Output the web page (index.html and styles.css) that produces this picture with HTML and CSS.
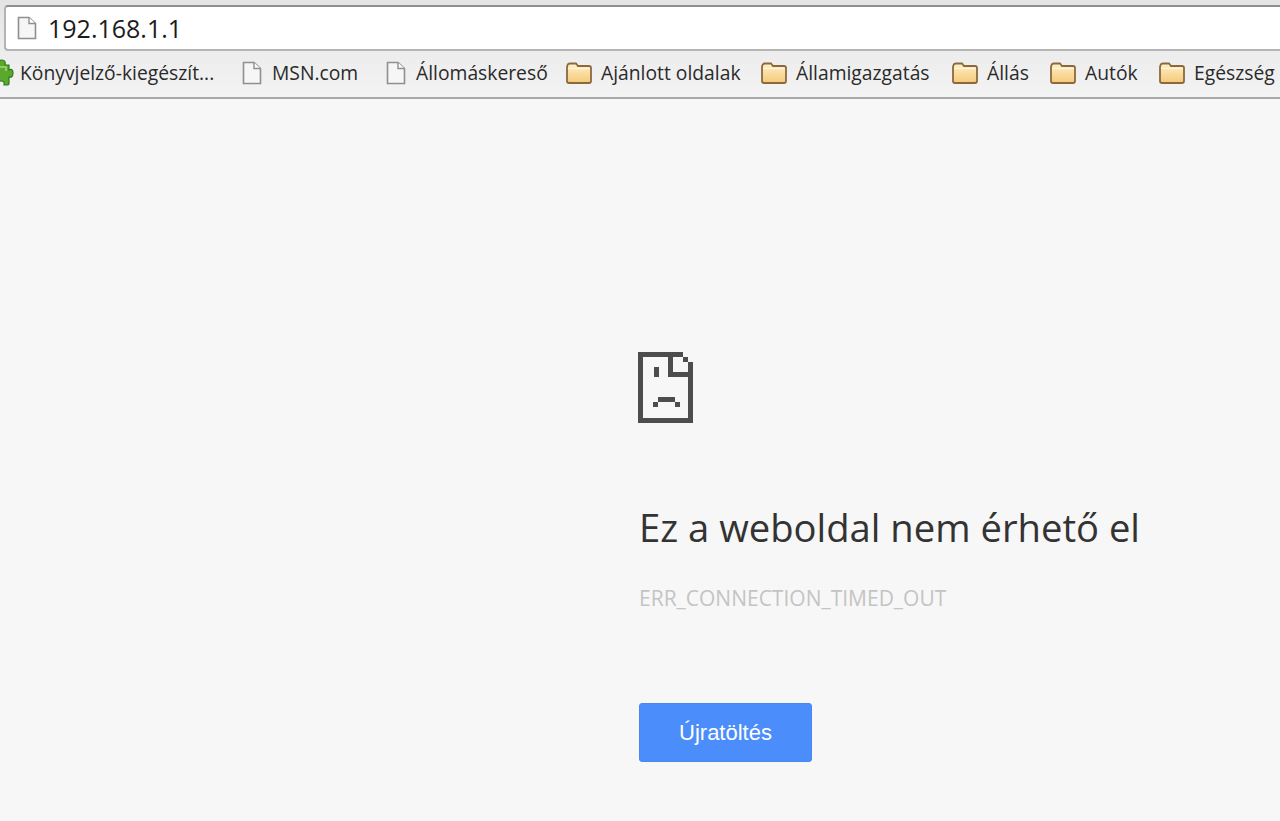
FILE: index.html
```html
<!DOCTYPE html>
<html lang="hu">
<head>
<meta charset="utf-8">
<title>192.168.1.1</title>
<link rel="stylesheet" href="styles.css">
</head>
<body>
<svg class="defs" width="0" height="0">
  <defs>
    <linearGradient id="fg" x1="0" y1="0" x2="0" y2="1"><stop offset="0" stop-color="#fff0c8"/><stop offset="1" stop-color="#f5c878"/></linearGradient>
    <symbol id="page" viewBox="0 0 21 24"><path d="M2.5 1.5H13L19.5 7.5V22.5H2.5Z" fill="#f6f6f6" stroke="#8f8f8f" stroke-width="1.6"/><path d="M13 1.5V7.5H19.5" fill="#fff" stroke="#8f8f8f" stroke-width="1.4"/></symbol>
    <symbol id="folder" viewBox="0 0 26 22"><path d="M1 5V19Q1 21 3 21H23Q25 21 25 19V6Q25 4 23 4H12L10 1.500H4Q2 1.500 1.500 3Z" fill="url(#fg)" stroke="#8a6a3c" stroke-width="1.8"/><path d="M2 6.500H24" stroke="#fff6dc" stroke-width="1.200"/></symbol>
  </defs>
</svg>
<header class="chrome">
  <div class="omnibox">
    <svg class="omni-icon" width="21" height="24"><use href="#page"/></svg>
    <span class="url">192.168.1.1</span>
  </div>
  <nav class="bookmarks">
    <a class="bm bm-ext">
      <svg class="puzzle" width="17" height="27" viewBox="0 0 17 27"><path d="M0 6H2Q1 1 5 1T8 6H12V11Q16 9 16 14T12 18V24Q12 26 10 26H7Q8 22 4 22T1 26H0Z" fill="#5aa82e" stroke="#2f7a1a" stroke-width="1.200"/><path d="M3 8H9V12" fill="none" stroke="#a4d878" stroke-width="1.500"/></svg>
      <span>Könyvjelző-kiegészít...</span>
    </a>
    <a class="bm bm-msn"><svg class="ic-page" width="21" height="24"><use href="#page"/></svg><span>MSN.com</span></a>
    <a class="bm bm-allo"><svg class="ic-page" width="21" height="24"><use href="#page"/></svg><span>Állomáskereső</span></a>
    <a class="bm bm-ajan"><svg class="ic-folder" width="26" height="22"><use href="#folder"/></svg><span>Ajánlott oldalak</span></a>
    <a class="bm bm-alla"><svg class="ic-folder" width="26" height="22"><use href="#folder"/></svg><span>Államigazgatás</span></a>
    <a class="bm bm-allas"><svg class="ic-folder" width="26" height="22"><use href="#folder"/></svg><span>Állás</span></a>
    <a class="bm bm-auto"><svg class="ic-folder" width="26" height="22"><use href="#folder"/></svg><span>Autók</span></a>
    <a class="bm bm-eg"><svg class="ic-folder" width="26" height="22"><use href="#folder"/></svg><span>Egészség</span></a>
  </nav>
</header>
<main class="error">
  <svg class="sad" width="55" height="71" viewBox="0 0 55 71" shape-rendering="crispEdges">
    <path fill="#4d4d4d" fill-rule="evenodd" d="M0 0H45V5H50V10H55V71H0ZM5 5V66H50V25H30V5ZM35 5H45V10H50V20H35Z"/>
    <path fill="#4d4d4d" d="M16 15H21V25H16ZM20 45H37V50H20ZM15 50H20V55H15ZM37 50H42V55H37Z"/>
  </svg>
  <h1 class="title">Ez a weboldal nem érhető el</h1>
  <p class="code">ERR_CONNECTION_TIMED_OUT</p>
  <button class="reload">Újratöltés</button>
</main>
</body>
</html>
```
FILE: styles.css
```css
html, body { margin: 0; padding: 0; height: 100%; overflow: hidden; }
body { background: #f7f7f7; font-family: "Open Sans", "Noto Sans", sans-serif; }
.defs { position: absolute; }
.chrome { height: 99px; box-sizing: border-box; background: linear-gradient(#e4e4e4, #ececec 50%, #f3f3f3); border-bottom: 2px solid #a8a8a8; padding-top: 5px; }
.omnibox { height: 46px; box-sizing: border-box; margin-left: 4px; background: #fff; border: 2px solid #b4b4b4; border-top-color: #8e8e8e; border-radius: 4px 0 0 4px; border-right: 0; display: flex; align-items: center; padding-left: 10px; }
.omni-icon { flex: none; }
.url { margin-left: 11px; font-size: 25px; color: #1c1c1c; line-height: 1; }
.bookmarks { height: 43px; display: flex; align-items: center; white-space: nowrap; overflow: hidden; }
.bm { display: flex; align-items: center; flex: none; font-size: 19.300px; color: #2a2a2a; }
.bm span { display: block; }
.puzzle { flex: none; margin-right: 6px; }
.bm-ext { margin-left: -3px; width: 244px; }
.bm-msn { width: 144px; }
.bm-allo { width: 181px; }
.bm-ajan { width: 195px; }
.bm-alla { width: 191px; }
.bm-allas { width: 98px; }
.bm-auto { width: 109px; }
.ic-page { flex: none; margin-right: 10px; }
.ic-folder { flex: none; margin-right: 9px; }
.error { margin-left: 639px; padding-top: 253px; display: flex; flex-direction: column; align-items: flex-start; }
.sad { display: block; margin-left: -1px; }
.title { margin: 81px 0 0; font-size: 38.200px; line-height: 46px; font-weight: 400; color: #333; white-space: nowrap; }
.code { margin: 35px 0 0; font-size: 21px; line-height: 26px; color: #c4c4c4; }
.reload { margin-top: 92px; width: 173px; height: 59px; background: #4b8dfb; border: 1px solid #4a87ee; border-radius: 3px; color: #fff; font-family: "Liberation Sans", sans-serif; font-size: 22px; padding: 0; }
```
